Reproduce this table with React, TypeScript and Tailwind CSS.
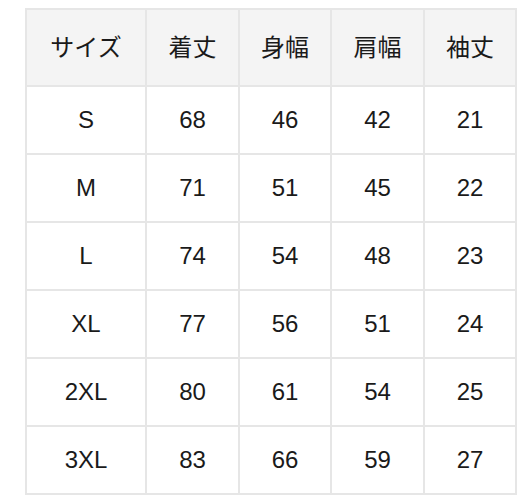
import React from "react";

const headers = ["サイズ", "着丈", "身幅", "肩幅", "袖丈"];

const rows = [
  ["S", "68", "46", "42", "21"],
  ["M", "71", "51", "45", "22"],
  ["L", "74", "54", "48", "23"],
  ["XL", "77", "56", "51", "24"],
  ["2XL", "80", "61", "54", "25"],
  ["3XL", "83", "66", "59", "27"],
];

export default function App() {
  return (
    <div className="w-[530px] h-[500px] bg-white pt-[8px] pl-[25px] font-['Liberation_Sans','Noto_Sans_CJK_JP',sans-serif] text-[24px] text-[#1a1a1a]">
      <table className="table-fixed border-collapse w-[490px]">
        <colgroup>
          <col className="w-[120px]" />
          <col className="w-[93px]" />
          <col className="w-[92px]" />
          <col className="w-[93px]" />
          <col className="w-[92px]" />
        </colgroup>
        <thead>
          <tr>
            {headers.map((h) => (
              <th
                key={h}
                className="h-[77px] p-0 border-2 border-[#e6e6e6] bg-[#f4f4f4] font-normal text-center"
              >
                {h}
              </th>
            ))}
          </tr>
        </thead>
        <tbody>
          {rows.map((row) => (
            <tr key={row[0]}>
              {row.map((cell, i) => (
                <td
                  key={i}
                  className="h-[68px] p-0 border-2 border-[#e6e6e6] text-center"
                >
                  {cell}
                </td>
              ))}
            </tr>
          ))}
        </tbody>
      </table>
    </div>
  );
}
